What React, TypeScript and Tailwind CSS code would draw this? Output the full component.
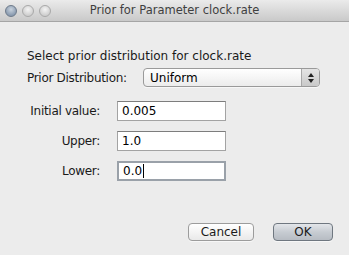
import React from "react";

const font = { fontFamily: '"Lucida Grande", "DejaVu Sans", sans-serif' };

function Light({ active }: { active?: boolean }) {
  return (
    <div
      className={
        "h-[12px] w-[12px] rounded-full border " +
        (active
          ? "border-[#6d7a8a] bg-[radial-gradient(circle_at_50%_35%,#c9d3de,#8a9bb0_70%)]"
          : "border-[#a9a9a9] bg-[radial-gradient(circle_at_50%_35%,#f4f4f4,#cfcfcf_70%)]")
      }
    />
  );
}

function Field({ label, value, focused }: { label: string; value: string; focused?: boolean }) {
  return (
    <div className="flex items-center">
      <div className="w-[101px] pr-[1px] text-right text-[12px] tracking-[-0.3px] text-[#1a1a1a]">{label}</div>
      <div
        className={
          "ml-[16px] flex h-[20px] w-[109px] items-center bg-white px-[4px] text-[12px] text-black " +
          (focused
            ? "border-2 border-[#9aa1a9] px-[3px]"
            : "border border-[#a3a3a3] border-t-[#7d7d7d]")
        }
      >
        {value}
        {focused && <span className="ml-[1px] h-[14px] w-[1px] bg-black" />}
      </div>
    </div>
  );
}

export default function App() {
  return (
    <div className="flex h-[255px] w-[349px] flex-col overflow-hidden bg-[#ececec]" style={font}>
      {/* title bar */}
      <div className="flex h-[22px] items-center border-b border-[#a5a5a5] bg-gradient-to-b from-[#ebebeb] to-[#c9c9c9]">
        <div className="flex w-[56px] gap-[5px] pl-[5px]">
          <Light active />
          <Light />
          <Light />
        </div>
        <div className="flex-1 text-center text-[11.5px] text-[#3f3f3f]">Prior for Parameter clock.rate</div>
        <div className="w-[56px]" />
      </div>

      <div className="flex flex-1 flex-col pl-[27px] pt-[26px]">
        <div className="h-[16px] text-[12px] leading-[16px] text-[#1a1a1a]">
          Select prior distribution for clock.rate
        </div>

        <div className="mt-[4px] flex items-center">
          <div className="w-[116px] text-[12px] tracking-[-0.3px] text-[#1a1a1a]">Prior Distribution:</div>
          <div className="flex h-[19px] w-[177px] overflow-hidden rounded-[4px] border border-[#9a9a9a] bg-gradient-to-b from-[#ffffff] to-[#ececec] shadow-[0_1px_0_rgba(255,255,255,0.6)]">
            <div className="flex flex-1 items-center pl-[6px] text-[12px] text-black">Uniform</div>
            <div className="flex w-[18px] flex-col items-center justify-center gap-[2px] border-l border-[#a8a8a8] bg-gradient-to-b from-[#e4e4e4] to-[#c9c9c9]">
              <svg width="6" height="4" viewBox="0 0 6 4">
                <path d="M3 0 L6 4 L0 4 Z" fill="#222" />
              </svg>
              <svg width="6" height="4" viewBox="0 0 6 4">
                <path d="M0 0 L6 0 L3 4 Z" fill="#222" />
              </svg>
            </div>
          </div>
        </div>

        <div className="ml-[-27px] mt-[14px] flex flex-col gap-[10px]">
          <Field label="Initial value:" value="0.005" />
          <Field label="Upper:" value="1.0" />
          <Field label="Lower:" value="0.0" focused />
        </div>

        <div className="mr-[16px] mt-auto mb-[14px] flex justify-end gap-[19px]">
          <button className="flex h-[18px] w-[66px] items-center justify-center rounded-[4px] border border-[#9c9c9c] bg-gradient-to-b from-[#ffffff] to-[#e9e9e9] text-[12px] text-[#1a1a1a] shadow-[0_1px_0_rgba(255,255,255,0.6)]">
            Cancel
          </button>
          <button className="flex h-[18px] w-[60px] items-center justify-center rounded-[4px] border border-[#6f7780] bg-gradient-to-b from-[#e3e6ea] via-[#c7ccd2] to-[#b7bcc3] text-[12px] text-[#1a1a1a] shadow-[0_1px_0_rgba(255,255,255,0.6)]">
            OK
          </button>
        </div>
      </div>
    </div>
  );
}
